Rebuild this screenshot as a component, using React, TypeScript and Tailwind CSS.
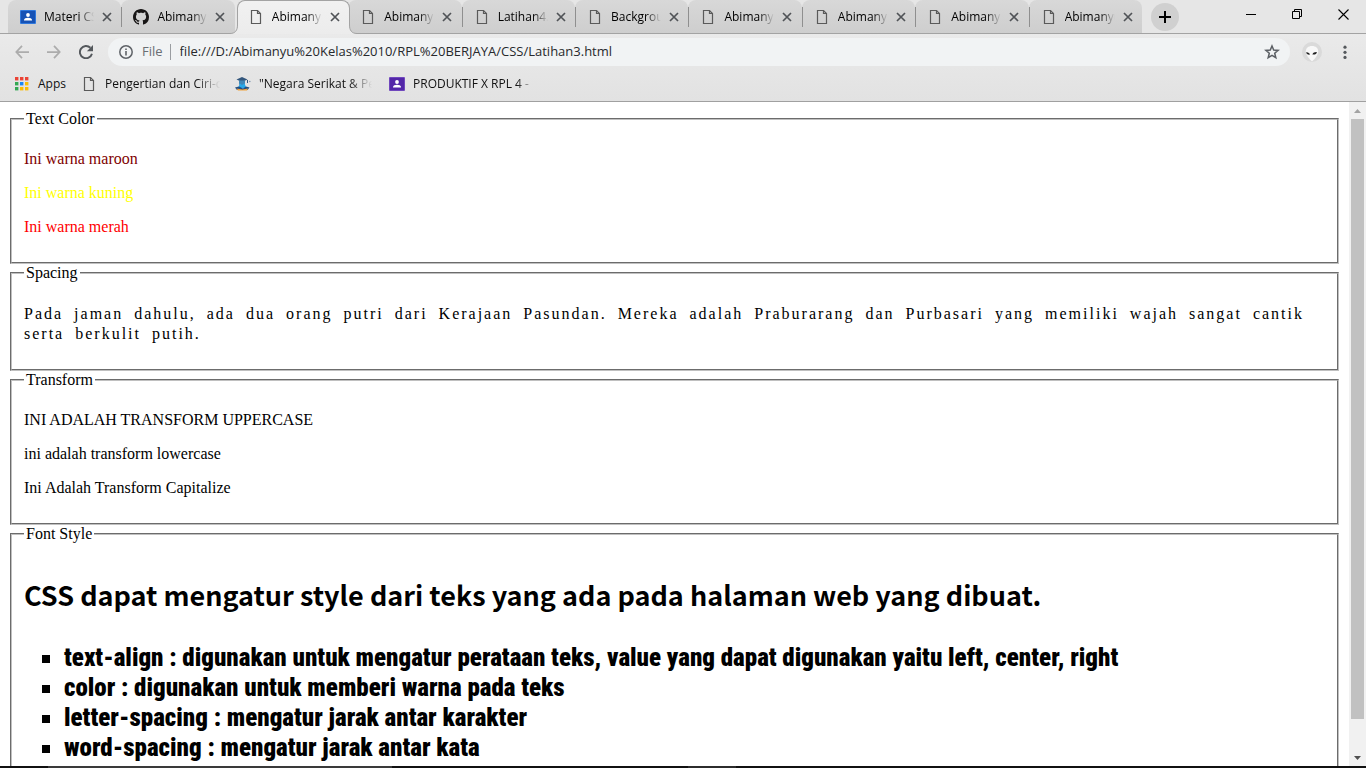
import React from "react";

type TabInfo = { title: string; icon: "file" | "classroom" | "github"; active?: boolean };

const tabs: TabInfo[] = [
  { title: "Materi CSS", icon: "classroom" },
  { title: "Abimanyu", icon: "github" },
  { title: "Abimanyu", icon: "file", active: true },
  { title: "Abimanyu", icon: "file" },
  { title: "Latihan4.html", icon: "file" },
  { title: "Background", icon: "file" },
  { title: "Abimanyu", icon: "file" },
  { title: "Abimanyu", icon: "file" },
  { title: "Abimanyu", icon: "file" },
  { title: "Abimanyu", icon: "file" },
];

function FileIcon() {
  return (
    <svg width="16" height="16" viewBox="0 0 16 16" fill="none" stroke="#5a5a5a" className="shrink-0">
      <path d="M3.5 1.5H9.5L12.5 4.5V14.5H3.5Z" strokeWidth="1.2" />
      <path d="M9.5 1.5V4.5H12.5" strokeWidth="1.2" />
    </svg>
  );
}

function ClassroomIcon({ color, edge }: { color: string; edge: string }) {
  return (
    <svg width="16" height="16" viewBox="0 0 16 16" className="shrink-0">
      <rect x="0" y="1" width="16" height="14" rx="1" fill={edge} />
      <rect x="1" y="2" width="14" height="12" fill={color} />
      <circle cx="8" cy="6" r="1.9" fill="#fff" />
      <path d="M4 11.2C4 9.6 6 8.8 8 8.8S12 9.6 12 11.2V11.5H4Z" fill="#fff" />
    </svg>
  );
}

function GithubIcon() {
  return (
    <svg width="16" height="16" viewBox="0 0 16 16" fill="#181616" className="shrink-0">
      <path d="M8 0C3.58 0 0 3.58 0 8c0 3.54 2.29 6.53 5.47 7.59.4.07.55-.17.55-.38 0-.19-.01-.82-.01-1.49-2.01.37-2.53-.49-2.69-.94-.09-.23-.48-.94-.82-1.13-.28-.15-.68-.52-.01-.53.63-.01 1.08.58 1.23.82.72 1.21 1.87.87 2.33.66.07-.52.28-.87.51-1.07-1.78-.2-3.64-.89-3.64-3.95 0-.87.31-1.59.82-2.15-.08-.2-.36-1.02.08-2.12 0 0 .67-.21 2.2.82.64-.18 1.32-.27 2-.27s1.36.09 2 .27c1.53-1.04 2.2-.82 2.2-.82.44 1.1.16 1.92.08 2.12.51.56.82 1.27.82 2.15 0 3.07-1.87 3.75-3.65 3.95.29.25.54.73.54 1.48 0 1.07-.01 1.93-.01 2.2 0 .21.15.46.55.38A8.01 8.01 0 0 0 16 8c0-4.42-3.58-8-8-8Z" />
    </svg>
  );
}

function StudentIcon() {
  return (
    <svg width="16" height="16" viewBox="0 0 16 16" className="shrink-0">
      <path d="M1.5 3.5L7 1L12.5 3.5L7 6Z" fill="#33567c" />
      <path d="M4 4.5H10V7A3 3 0 0 1 4 7Z" fill="#3f87b8" />
      <path d="M5 7.5L7 9L9.5 7.5L11.5 12H3Z" fill="#29a8e8" />
      <path d="M0 11.5L4 10.5L8 12.5L11 10.5L14.5 11.5L12.5 14H2Z" fill="#1f4f86" />
      <path d="M1.5 12.5L7.5 13.5L13 12.5L12 14.5H3Z" fill="#f2a33c" />
      <path d="M12.5 4V7" stroke="#33567c" />
      <circle cx="14.8" cy="5.5" r="0.8" fill="#7d95b0" />
    </svg>
  );
}

function AppsIcon() {
  const colors = ["#ea4335", "#ea4335", "#ea4335", "#34a853", "#1a86f5", "#fbbc05", "#34a853", "#fbbc05", "#fbbc05"];
  return (
    <svg width="14" height="14" viewBox="0 0 14 14" className="shrink-0">
      {colors.map((c, i) => (
        <rect key={i} x={(i % 3) * 5} y={Math.floor(i / 3) * 5} width="3.4" height="3.4" fill={c} />
      ))}
    </svg>
  );
}

function Foot({ side }: { side: "left" | "right" }) {
  const left = side === "left";
  return (
    <svg
      width="8"
      height="9"
      viewBox="0 0 8 9"
      className={left ? "absolute bottom-0 -left-2" : "absolute -right-2 bottom-0"}
    >
      <path d={left ? "M8 0H7.5C7.5 5 5.5 8.5 0 8.5V9H8Z" : "M0 0H0.5C0.5 5 2.5 8.5 8 8.5V9H0Z"} fill="#ececec" />
      <path d={left ? "M7.5 0C7.5 5 5.5 8.5 0 8.5" : "M0.5 0C0.5 5 2.5 8.5 8 8.5"} fill="none" stroke="#a3a3a3" />
    </svg>
  );
}

function Tab({ tab, divider }: { tab: TabInfo; divider: boolean }) {
  return (
    <div
      className={
        tab.active
          ? "relative z-10 -mr-[2px] -mb-px ml-[2px] flex min-w-0 flex-1 items-center rounded-t-lg border-x border-t border-[#a3a3a3] bg-linear-to-b from-[#f1f1f1] to-[#ececec] pb-px pl-[10px]"
          : "relative flex min-w-0 flex-1 items-center rounded-t-lg bg-linear-to-b from-[#d8d8d8] to-[#cecece] pl-3"
      }
    >
      {tab.active && <Foot side="left" />}
      {tab.active && <Foot side="right" />}
      {divider && <span className="absolute top-[7px] left-0 h-5 w-px bg-[#8f8f8f]" />}
      {tab.icon === "file" && <FileIcon />}
      {tab.icon === "github" && <GithubIcon />}
      {tab.icon === "classroom" && <ClassroomIcon color="#1652b5" edge="#2f78dd" />}
      <span className="ml-2 w-[50px] shrink-0 overflow-hidden mask-r-from-70% text-xs whitespace-nowrap">{tab.title}</span>
      <button type="button" aria-label="Close tab" className="ml-2 shrink-0">
        <svg width="10" height="10" viewBox="0 0 10 10" stroke="#505357" strokeWidth="1.7">
          <path d="M1 1L9 9M9 1L1 9" />
        </svg>
      </button>
    </div>
  );
}

function TabStrip() {
  return (
    <div className="flex h-[34px] border-b border-[#a3a3a3] bg-[#e6e6e6] pl-2">
      <div className="flex min-w-0 flex-1">
        {tabs.map((t, i) => (
          <Tab key={i} tab={t} divider={i > 0 && i !== 2 && i !== 3} />
        ))}
      </div>
      <div className="flex w-56 shrink-0 items-start">
        <button type="button" aria-label="New tab" className="mt-[3px] ml-[9px] flex size-7 items-center justify-center rounded-full bg-[#d0d0d0]">
          <svg width="12" height="12" viewBox="0 0 12 12" stroke="#000" strokeWidth="2">
            <path d="M6 0V12M0 6H12" />
          </svg>
        </button>
        <div className="ml-auto flex h-7 items-center">
          <button type="button" aria-label="Minimize" className="flex w-[46px] justify-center">
            <svg width="10" height="10" viewBox="0 0 10 10" stroke="#000">
              <path d="M0 5.5H10" />
            </svg>
          </button>
          <button type="button" aria-label="Restore" className="flex w-[46px] justify-center">
            <svg width="10" height="10" viewBox="0 0 10 10" fill="none" stroke="#000">
              <path d="M0.5 2.5H7.5V9.5H0.5ZM2.5 2.5V0.5H9.5V7.5H7.5" />
            </svg>
          </button>
          <button type="button" aria-label="Close" className="flex w-[46px] justify-center">
            <svg width="11" height="11" viewBox="0 0 11 11" stroke="#000" strokeWidth="1.1">
              <path d="M0.5 0.5L10.5 10.5M10.5 0.5L0.5 10.5" />
            </svg>
          </button>
        </div>
      </div>
    </div>
  );
}

function Toolbar() {
  return (
    <div className="flex h-9 items-center pl-[15px]">
      <button type="button" aria-label="Back" className="w-8">
        <svg width="14" height="14" viewBox="0 0 16 16" fill="none" stroke="#acacac" strokeWidth="2">
          <path d="M16 8H2M8 1L1.5 8L8 15" />
        </svg>
      </button>
      <button type="button" aria-label="Forward" className="w-8">
        <svg width="14" height="14" viewBox="0 0 16 16" fill="none" stroke="#acacac" strokeWidth="2">
          <path d="M0 8H14M8 1L14.5 8L8 15" />
        </svg>
      </button>
      <button type="button" aria-label="Reload" className="w-[29px]">
        <svg width="14" height="14" viewBox="0 0 16 16">
          <path d="M13 3.2A7 7 0 1 0 14.8 10" fill="none" stroke="#54585c" strokeWidth="2.2" />
          <path d="M16 0V7H9Z" fill="#54585c" />
        </svg>
      </button>
      <div className="flex h-7 min-w-0 flex-1 items-center rounded-full bg-[#f1f3f4] pr-[10px] pl-[11px] text-[13px]">
        <svg width="14" height="14" viewBox="0 0 14 14" className="shrink-0">
          <circle cx="7" cy="7" r="6.2" fill="none" stroke="#5f6368" strokeWidth="1.5" />
          <path d="M7 6V10.5M7 3.4V5" stroke="#5f6368" strokeWidth="1.6" />
        </svg>
        <span className="ml-[9px] text-[#6a6e73]">File</span>
        <span className="ml-[7px] h-4 w-px bg-[#9a9da1]" />
        <input
          aria-label="Address"
          className="ml-[9px] min-w-0 flex-1 bg-transparent text-[#27292c] outline-none"
          defaultValue="file:///D:/Abimanyu%20Kelas%2010/RPL%20BERJAYA/CSS/Latihan3.html"
        />
        <button type="button" aria-label="Bookmark this page">
          <svg width="16" height="16" viewBox="0 0 16 16" fill="none" stroke="#5b5f64" strokeWidth="1.5">
            <path d="M8 2L9.7 6.1L14.1 6.4L10.7 9.3L11.8 13.7L8 11.3L4.2 13.7L5.3 9.3L1.9 6.4L6.3 6.1Z" />
          </svg>
        </button>
      </div>
      <button type="button" aria-label="Profile" className="ml-3">
        <svg width="20" height="20" viewBox="0 0 20 20">
          <circle cx="10" cy="10" r="10" fill="#dadada" />
          <path d="M10 4C6.2 4 3.8 6.2 3.8 9.5C3.8 13 7.5 17 10 19.5C12.5 17 16.2 13 16.2 9.5C16.2 6.2 13.8 4 10 4Z" fill="#f8f8f8" />
          <path d="M4.2 10.2C5.8 9.9 7.8 10.8 8 12.6C6 13 4.2 12 4.2 10.2ZM14.8 10C13 9.8 11 10.6 10.4 12.4C12.4 13 14.8 12.2 14.8 10Z" fill="#222" />
        </svg>
      </button>
      <button type="button" aria-label="Menu" className="mr-[13px] ml-[15px]">
        <svg width="16" height="16" viewBox="0 0 16 16" fill="#54585c">
          <circle cx="8" cy="3.2" r="1.6" />
          <circle cx="8" cy="8.3" r="1.6" />
          <circle cx="8" cy="13.4" r="1.6" />
        </svg>
      </button>
    </div>
  );
}

function Bookmarks() {
  return (
    <nav className="flex h-[31px] items-center pb-[3px] pl-[15px] text-xs whitespace-nowrap text-[#111]">
      <a href="#apps" className="flex w-[66px] items-center gap-[9px]">
        <AppsIcon />
        Apps
      </a>
      <a href="#pengertian" className="flex w-[154px] items-center gap-2">
        <FileIcon />
        <span className="w-[115px] overflow-hidden mask-r-from-80%">Pengertian dan Ciri-ciri</span>
      </a>
      <a href="#negara" className="flex w-[154px] items-center gap-2">
        <StudentIcon />
        <span className="w-[113px] overflow-hidden mask-r-from-80%">"Negara Serikat &amp; Pers</span>
      </a>
      <a href="#produktif" className="flex items-center gap-2">
        <ClassroomIcon color="#5327a8" edge="#7048bd" />
        <span className="w-[122px] overflow-hidden mask-r-from-85%">PRODUKTIF X RPL 4 -</span>
      </a>
    </nav>
  );
}

function Group({ title, children }: { title: string; children: React.ReactNode }) {
  return (
    <fieldset className="mx-[2px] min-w-0 border-2 border-[#c0c0c0] px-3 pt-[6px] pb-[10px] [border-style:groove]">
      <legend className="px-[2px]">{title}</legend>
      {children}
    </fieldset>
  );
}

function Scrollbar() {
  return (
    <div className="flex w-[17px] shrink-0 flex-col items-center bg-[#f1f1f1]">
      <button type="button" aria-label="Scroll up" className="flex h-[17px] w-full items-center justify-center">
        <svg width="7" height="4" viewBox="0 0 7 4" fill="#a3a3a3">
          <path d="M0 4L3.5 0L7 4Z" />
        </svg>
      </button>
      <div className="flex w-full flex-1 flex-col px-[2px]">
        <div className="flex-20 bg-[#c1c1c1]" />
        <div className="flex-1" />
      </div>
      <button type="button" aria-label="Scroll down" className="flex h-[17px] w-full items-center justify-center">
        <svg width="7" height="4" viewBox="0 0 7 4" fill="#505050">
          <path d="M0 0L3.5 4L7 0Z" />
        </svg>
      </button>
    </div>
  );
}

export default function App() {
  return (
    <div className="flex h-screen flex-col overflow-hidden bg-white">
      <header className="shrink-0 border-b border-[#a0a0a0] bg-linear-to-b from-[#eeeeee] to-[#e2e2e2] font-['Open_Sans','Noto_Sans',sans-serif]">
        <TabStrip />
        <Toolbar />
        <Bookmarks />
      </header>
      <div className="flex min-h-0 flex-1">
        <main className="min-w-0 flex-1 overflow-hidden p-2 font-['Liberation_Serif',serif] text-base leading-[18px] text-black">
          <Group title="Text Color">
            <p className="my-4 text-[#800000]">Ini warna maroon</p>
            <p className="my-4 text-[#ffff00]">Ini warna kuning</p>
            <p className="my-4 text-[#ff0000]">Ini warna merah</p>
          </Group>
          <Group title="Spacing">
            <p className="mt-4 mb-[15px] leading-5 tracking-[2px] [word-spacing:5px]">
              Pada jaman dahulu, ada dua orang putri dari Kerajaan Pasundan. Mereka adalah Praburarang dan Purbasari yang
              memiliki wajah sangat cantik serta berkulit putih.
            </p>
          </Group>
          <Group title="Transform">
            <p className="my-4 uppercase">Ini adalah transform uppercase</p>
            <p className="my-4 lowercase">Ini adalah transform lowercase</p>
            <p className="my-4 capitalize">Ini adalah transform capitalize</p>
          </Group>
          <Group title="Font Style">
            <h1 className="mt-7 mb-[30px] font-['Noto_Sans_CJK_SC','Liberation_Sans',sans-serif] text-[27px] leading-9 font-bold whitespace-nowrap">
              CSS dapat mengatur style dari teks yang ada pada halaman web yang dibuat.
            </h1>
            <ul className="mb-4 list-[square] pl-10 font-['Roboto_Condensed',Roboto,sans-serif] text-[25px] leading-[30px] font-black whitespace-nowrap">
              <li>text-align : digunakan untuk mengatur perataan teks, value yang dapat digunakan yaitu left, center, right</li>
              <li>color : digunakan untuk memberi warna pada teks</li>
              <li>letter-spacing : mengatur jarak antar karakter</li>
              <li>word-spacing : mengatur jarak antar kata</li>
            </ul>
          </Group>
        </main>
        <Scrollbar />
      </div>
      <footer className="flex h-[2px] shrink-0 bg-[#111111]">
        <span className="ml-12 w-[344px] bg-[#3a3a3a]" />
        <span className="ml-[296px] w-12 bg-[#2c2c2c]" />
      </footer>
    </div>
  );
}
